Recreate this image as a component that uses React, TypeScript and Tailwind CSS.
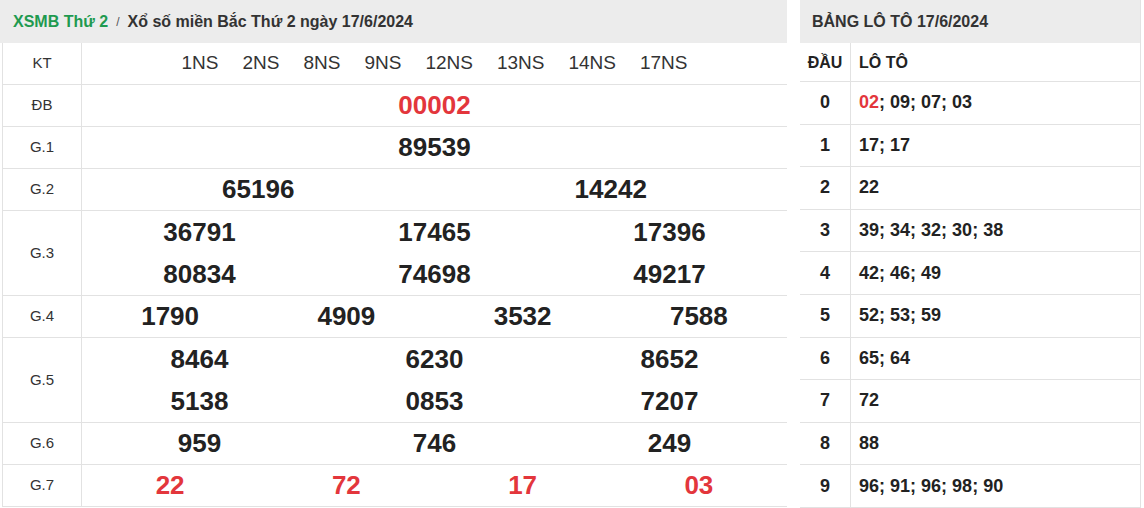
import React from 'react';

type Prize = { label: string; rows: string[][]; red?: boolean };

const prizes: Prize[] = [
    { label: 'ĐB', rows: [['00002']], red: true },
    { label: 'G.1', rows: [['89539']] },
    { label: 'G.2', rows: [['65196', '14242']] },
    { label: 'G.3', rows: [['36791', '17465', '17396'], ['80834', '74698', '49217']] },
    { label: 'G.4', rows: [['1790', '4909', '3532', '7588']] },
    { label: 'G.5', rows: [['8464', '6230', '8652'], ['5138', '0853', '7207']] },
    { label: 'G.6', rows: [['959', '746', '249']] },
    { label: 'G.7', rows: [['22', '72', '17', '03']], red: true },
];

const codes = ['1NS', '2NS', '8NS', '9NS', '12NS', '13NS', '14NS', '17NS'];

const loto: { dau: string; items: string[] }[] = [
    { dau: '0', items: ['02', '09', '07', '03'] },
    { dau: '1', items: ['17', '17'] },
    { dau: '2', items: ['22'] },
    { dau: '3', items: ['39', '34', '32', '30', '38'] },
    { dau: '4', items: ['42', '46', '49'] },
    { dau: '5', items: ['52', '53', '59'] },
    { dau: '6', items: ['65', '64'] },
    { dau: '7', items: ['72'] },
    { dau: '8', items: ['88'] },
    { dau: '9', items: ['96', '91', '96', '98', '90'] },
];

const App = () => {
    return (
        <div className="flex w-[1144px] h-[508px] overflow-hidden bg-white text-[#222] font-['Liberation_Sans',Arial,sans-serif]">
            {/* ket qua */}
            <div className="w-[787px] flex flex-col">
                <div className="h-[43px] shrink-0 bg-[#ececec] flex items-center pl-[13px] text-[16px] font-bold">
                    <span className="text-[#1f9a50]">XSMB Thứ 2</span>
                    <span className="mx-[8px] text-[12px] text-[#555] font-normal">/</span>
                    <span className="text-[#333]">Xổ số miền Bắc Thứ 2 ngày 17/6/2024</span>
                </div>
                <div className="ml-[2px] shrink-0 border-l border-[#e2e2e2] flex flex-col">
                    <div className="h-[42px] flex border-b border-[#e2e2e2]">
                        <div className="w-[79px] shrink-0 border-r border-[#e2e2e2] flex items-center justify-center text-[15px] text-[#333]">KT</div>
                        <div className="flex-1 flex items-center justify-center gap-[24px] text-[19px] text-[#333]">
                            {codes.map((c) => (
                                <span key={c}>{c}</span>
                            ))}
                        </div>
                    </div>
                    {prizes.map((p) => (
                        <div key={p.label} className="flex border-b border-[#e2e2e2]">
                            <div className="w-[79px] shrink-0 border-r border-[#e2e2e2] flex items-center justify-center text-[15px] text-[#333]">
                                {p.label}
                            </div>
                            <div className="flex-1 flex flex-col">
                                {p.rows.map((r, i) => (
                                    <div key={i} className={`${p.rows.length > 1 ? 'h-[42px]' : 'h-[41px]'} flex items-center`}>
                                        {r.map((n, j) => (
                                            <span
                                                key={j}
                                                className={`flex-1 text-center text-[26px] font-bold ${p.red ? 'text-[#e3363c]' : 'text-[#222]'}`}
                                            >
                                                {n}
                                            </span>
                                        ))}
                                    </div>
                                ))}
                            </div>
                        </div>
                    ))}
                </div>
            </div>

            {/* lo to */}
            <div className="ml-[13px] w-[341px] flex flex-col border-r border-[#e2e2e2]">
                <div className="h-[43px] shrink-0 bg-[#ececec] flex items-center pl-[12px] text-[16px] font-bold text-[#333]">
                    BẢNG LÔ TÔ 17/6/2024
                </div>
                <div className="h-[39px] shrink-0 flex border-b border-[#e2e2e2] text-[16px] font-bold text-[#222]">
                    <div className="w-[51px] shrink-0 border-r border-[#e2e2e2] flex items-center justify-center pt-[2px]">ĐẦU</div>
                    <div className="flex-1 flex items-center pl-[8px] pt-[2px]">LÔ TÔ</div>
                </div>
                {loto.map((row) => (
                    <div key={row.dau} className="h-[42.6px] shrink-0 flex border-b border-[#e2e2e2] text-[18px] font-bold text-[#222]">
                        <div className="w-[51px] shrink-0 border-r border-[#e2e2e2] flex items-center justify-center">{row.dau}</div>
                        <div className="flex-1 flex items-center pl-[8px]">
                            {row.items.map((it, k) => (
                                <span key={k} className="whitespace-pre">
                                    <span className={it === '02' ? 'text-[#e3363c]' : ''}>{it}</span>
                                    {k < row.items.length - 1 ? '; ' : ''}
                                </span>
                            ))}
                        </div>
                    </div>
                ))}
            </div>
        </div>
    );
};

export default App;
